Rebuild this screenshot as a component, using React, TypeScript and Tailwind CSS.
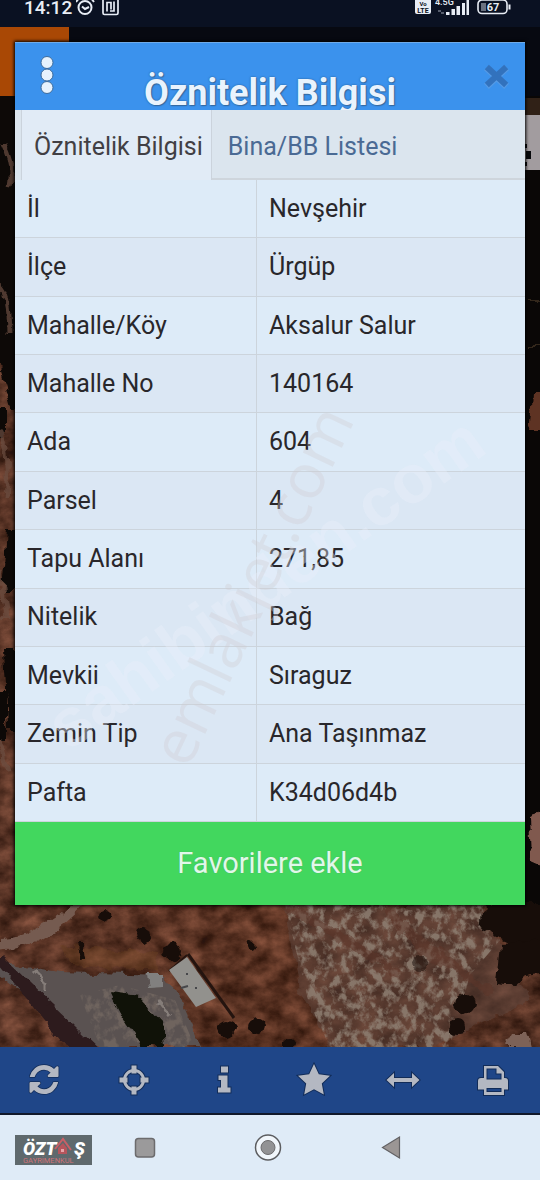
import React, { useState } from "react";

const rows: [string, string][] = [
  ["İl", "Nevşehir"],
  ["İlçe", "Ürgüp"],
  ["Mahalle/Köy", "Aksalur Salur"],
  ["Mahalle No", "140164"],
  ["Ada", "604"],
  ["Parsel", "4"],
  ["Tapu Alanı", "271,85"],
  ["Nitelik", "Bağ"],
  ["Mevkii", "Sıraguz"],
  ["Zemin Tip", "Ana Taşınmaz"],
  ["Pafta", "K34d06d4b"],
];

function StatusBar() {
  return (
    <header className="flex h-[27px] items-start justify-between overflow-hidden bg-[#0a1122] pl-6 pr-7 text-[#e8edf5]">
      <div className="flex items-start">
        <span className="text-[19px] leading-4 font-medium">14:12</span>
        <svg width="50" height="18" viewBox="0 0 50 18" className="ml-1" fill="none" stroke="#e8edf5" strokeWidth="2">
          <circle cx="9" cy="7.500" r="6.500" />
          <path d="M6 6.500l3 2.500 4-2M2-.5L0 2M16-.5L18 2" />
          <rect x="27" y="-2" width="15" height="16.500" rx="1.500" strokeWidth="1.700" />
          <path d="M31 11.500V2.500h4v7M34 11h4V1.500" strokeWidth="1.700" />
        </svg>
      </div>
      <svg width="98" height="18" viewBox="0 0 98 18" className="-mr-px" fill="#e8edf5" fontFamily="Roboto, sans-serif" fontWeight="700">
        <rect x="0" y="-3" width="16" height="17" rx="2" />
        <text x="8" y="6" fontSize="6" textAnchor="middle" fill="#0a1122">Vo</text>
        <text x="8" y="12.500" fontSize="7" textAnchor="middle" fill="#0a1122">LTE</text>
        <text x="20" y="5" fontSize="9" fontWeight="500">4.5G</text>
        <path d="M23 11h3M26 13h3" stroke="#a0a8b5" strokeWidth="1" />
        <path d="M31 12h3.500v3H31zM36.500 9H40v6h-3.500zM41.500 6H45v9h-3.500zM47 3h3v12h-3zM51.500 0H54v15h-2.500z" />
        <rect x="63" y="0" width="29" height="13.500" rx="4" fill="none" stroke="#e8edf5" strokeWidth="1.600" />
        <path d="M93.500 4.500h2v5h-2z" />
        <path d="M66 3h5v8h-5z" fill="#6b7280" />
        <text x="78" y="11" fontSize="11" textAnchor="middle">67</text>
      </svg>
    </header>
  );
}

function Satellite() {
  return (
    <svg className="absolute inset-0 h-full w-full" viewBox="0 27 540 1020" preserveAspectRatio="none" aria-hidden="true">
      <defs>
        <filter id="soil" x="0" y="0" width="100%" height="100%" colorInterpolationFilters="sRGB">
          <feTurbulence type="fractalNoise" baseFrequency="0.045 0.060" numOctaves="5" seed="8" />
          <feColorMatrix values="0.800 0 0 0 -0.050  0.550 0 0 0 -0.080  0.450 0 0 0 -0.090  0 0 0 0 1" />
        </filter>
        <filter id="rock" x="0" y="0" width="100%" height="100%" colorInterpolationFilters="sRGB">
          <feTurbulence type="fractalNoise" baseFrequency="0.120 0.100" numOctaves="4" seed="21" />
          <feColorMatrix values="0 0 0 0 0.560  0 0 0 0 0.500  0 0 0 0 0.450  4 1.500 0 0 -2.500" result="n" />
          <feComposite in="n" in2="SourceAlpha" operator="in" />
        </filter>
        <filter id="rough" x="-20%" y="-20%" width="140%" height="140%" colorInterpolationFilters="sRGB">
          <feTurbulence type="fractalNoise" baseFrequency="0.070" numOctaves="3" seed="3" result="t" />
          <feDisplacementMap in="SourceGraphic" in2="t" xChannelSelector="R" yChannelSelector="G" scale="12" />
          <feGaussianBlur stdDeviation="0.700" />
        </filter>
        <linearGradient id="ground" x1="0" x2="1">
          <stop offset="0" stopColor="#57362a" />
          <stop offset="0.500" stopColor="#5c3423" />
          <stop offset="1" stopColor="#452a20" />
        </linearGradient>
      </defs>
      <rect y="27" width="540" height="1020" fill="url(#ground)" />
      <rect y="27" width="540" height="1020" filter="url(#soil)" opacity="0.600" />
      <g filter="url(#rough)">
        <path d="M-10 90H28V410H12L-10 330ZM-8 410H5V440H-8ZM8 530H24V590H3ZM4 650H24V730H8ZM-4 690H6V740H-4Z" fill="#0d0907" />
        <path d="M4 145q10 20 6 40M-2 285q12 8 12 50M0 430q10 22 6 70M0 570l6 50M0 740l8 30" stroke="#6c4f42" strokeWidth="5" fill="none" opacity="0.700" />
      </g>
      <rect x="524" y="27" width="16" height="900" fill="#0a0706" />
      <g filter="url(#rough)">
        <path d="M533 395l10 0v36h-14z" fill="#5e3323" />
        <path d="M530 816l20-6v58l-18-8z" fill="#80594e" />
        <path d="M528 300h10M530 345h8" stroke="#33271b" strokeWidth="2" />
      </g>
      <g filter="url(#rough)">
        <path d="M0 938Q40 934 70 905L85 905Q50 945 0 952Z" fill="#755b50" />
        <path d="M0 962L60 972 165 975 185 1010 200 1047 95 1047 0 975Z" fill="#5a5251" />
        <path d="M60 945l95 8 5 18-90-6z" fill="#704522" opacity="0.350" />
      </g>
      <path d="M80 995L120 985 175 1000 195 1047H100Z" filter="url(#rock)" opacity="0.400" />
      <path d="M285 905L480 905 530 1000 430 1047 330 1047 300 990Z" fill="#5f473f" opacity="0.500" filter="url(#rough)" />
      <path d="M285 905L485 905 500 940 470 975 450 1047 330 1047 308 1000Z" filter="url(#rock)" opacity="0.850" />
      <g filter="url(#rough)">
        <path d="M285 905Q350 940 400 975M385 905Q410 945 445 965M400 925L490 992" stroke="#5c3327" strokeWidth="8" opacity="0.500" fill="none" />
        <path d="M505 1047l8-14h14l4 14z" fill="#7d6257" />
        <path d="M-6 958L4 958 102 1052H70Z" fill="#2d1b1d" />
      </g>
      <path d="M188 954L234 1018" stroke="#24140f" strokeWidth="3" />
      <path d="M169 971L187 955" stroke="#24140f" strokeWidth="2" />
      <path d="M169 970L187 957 216 998 196 1007Z" fill="#92918d" />
      <g filter="url(#rough)">
        <path d="M146 974h18v13l-16 1z" fill="#81807f" />
        <path d="M158 1001l13 16M32 970l14 14v8" stroke="#857d79" strokeWidth="3" fill="none" />
      </g>
      <path d="M186 974h2M195 988h2M181 988l7-2" stroke="#46474a" strokeWidth="2" />
      <g filter="url(#rough)" fill="#170d09">
        <path d="M110 994L140 998 162 1022 164 1047H142L124 1020Z" fill="#101208" />
        <circle cx="143" cy="935" r="8" />
        <circle cx="172" cy="951" r="9" />
        <path d="M78 944l5 0 2 15-5 1z" />
        <circle cx="225" cy="1029" r="9" />
        <circle cx="258" cy="1026" r="8" />
        <circle cx="251" cy="947" r="4" />
        <circle cx="104" cy="916" r="5" />
        <circle cx="288" cy="1044" r="5" />
        <circle cx="465" cy="1004" r="10" />
        <circle cx="457" cy="1026" r="7" />
        <circle cx="420" cy="964" r="8" opacity="0.500" />
        <path d="M485 903H545V945H515L482 930Z" />
        <path d="M500 943L545 940V974L525 977 515 986 496 984Z" />
      </g>
      <path d="M0 27H540V96H0Z" fill="#070911" />
      <path d="M0 27H69V96H0Z" fill="#a94805" />
      <rect x="524" y="98" width="16" height="17" fill="#302117" />
      <rect x="524" y="115" width="16" height="55" fill="#a29c9f" />
      <path d="M526 151h5v8h-5zM525 144h2v4h-2zM525 162h2v4h-2z" fill="#08090b" />
    </svg>
  );
}

function Watermarks() {
  return (
    <svg className="pointer-events-none absolute inset-0 h-full w-full" viewBox="15 42 510 863" aria-hidden="true">
      <text transform="translate(68 752) rotate(-35.500)" fontFamily="Liberation Sans, sans-serif" fontWeight="700" fontSize="68" fill="#eaf0f9" fillOpacity="0.380">
        sahibinden.com
      </text>
      <text transform="translate(188 770) rotate(-64.500)" fontFamily="Open Sans, sans-serif" fontWeight="400" fontSize="62" fill="#d0ccd2" fillOpacity="0.360">
        emlakjet.com
      </text>
    </svg>
  );
}

function InfoPanel() {
  const [tab, setTab] = useState(0);
  return (
    <section className="relative bg-[#ddeaf7] shadow-[0_0_3px_1px_#000000]" aria-label="Öznitelik Bilgisi">
      <div className="relative flex h-[68px] items-end justify-center overflow-hidden border-t border-[#6fabe8] bg-[#3b92ed]">
        <button aria-label="Menü" className="absolute left-5 top-3">
          <svg width="24" height="42" viewBox="0 0 24 42" fill="#e6f2fd" stroke="#3c6b9c" strokeWidth="1">
            <circle cx="12" cy="7.500" r="6" />
            <circle cx="12" cy="20" r="6" />
            <circle cx="12" cy="32.500" r="6" />
          </svg>
        </button>
        <h1 className="text-[36px] leading-[34px] font-bold text-[#e9f3fd] [text-shadow:0_0_2px_#24578c,1px_1px_1px_#3a6ea6]">Öznitelik Bilgisi</h1>
        <button aria-label="Kapat" className="absolute right-3 top-5">
          <svg width="32" height="28" viewBox="0 0 32 28" strokeLinecap="square">
            <path d="M8 7L23 21M23 7L8 21" stroke="#559ae5" strokeWidth="7" />
            <path d="M8 6L23 20M23 6L8 20" stroke="#3272bd" strokeWidth="6" />
          </svg>
        </button>
      </div>
      <div role="tablist" className="flex h-[70px] bg-[#dbe5ee] pl-[6px] text-[25px]">
        <button role="tab" aria-selected={tab === 0} onClick={() => setTab(0)} className="border-x border-[#cbd3dc] bg-[#e1ebf6] pt-1 pr-2 pl-3 text-[#413f44]">
          Öznitelik Bilgisi
        </button>
        <button role="tab" aria-selected={tab === 1} onClick={() => setTab(1)} className="grow border-b-2 border-[#ced5dc] px-4 pt-[6px] text-left text-[#4a6a94]">
          Bina/BB Listesi
        </button>
      </div>
      <table className="h-[642px] w-full table-fixed border-separate border-spacing-0 text-[25px] text-[#29272b]">
        <colgroup>
          <col className="w-[242px]" />
          <col />
        </colgroup>
        <tbody>
          {rows.map(([name, value]) => (
            <tr key={name} className="odd:bg-[#ddebf8] even:bg-[#dbe7f4]">
              <th scope="row" className="border-r border-b border-[#ccd4dc] pl-3 text-left font-normal">{name}</th>
              <td className="border-b border-[#ccd4dc] pl-3">{value}</td>
            </tr>
          ))}
        </tbody>
      </table>
      <button className="block h-[83px] w-full bg-[#42d75e] text-[29px] text-[#e1f8e9] [text-shadow:0_0_1px_#4b9e60]">Favorilere ekle</button>
      <Watermarks />
    </section>
  );
}

const tools: { label: string; icon: React.ReactNode }[] = [
  {
    label: "Yenile",
    icon: (
      <path
        transform="translate(3.500 4) scale(0.0189)"
        strokeWidth="80"
        d="M1511 928q0 5-1 7-64 268-268 434.500t-478 166.500q-146 0-282.500-55t-243.500-157l-129 129q-19 19-45 19t-45-19-19-45v-448q0-26 19-45t45-19h448q26 0 45 19t19 45-19 45l-137 137q71 66 161 102t187 36q134 0 250-65t186-179q11-17 53-117 8-23 30-23h192q13 0 22.500 9.500t9.500 22.500zm25-800v448q0 26-19 45t-45 19h-448q-26 0-45-19t-19-45 19-45l138-138q-148-137-349-137-134 0-250 65t-186 179q-11 17-53 117-8 23-30 23h-199q-13 0-22.500-9.500t-9.500-22.500v-7q65-268 270-434.500t480-166.500q146 0 284 55.500t245 156.500l130-129q19-19 45-19t45 19 19 45z"
      />
    ),
  },
  {
    label: "Konum",
    icon: (
      <>
        <circle cx="19" cy="19" r="9.500" fill="none" stroke="#122c58" strokeWidth="5" />
        <path d="M16.500 4.500h5v8h-5zM16.500 25.500h5v8h-5zM4.500 16.500h8v5h-8zM25.500 16.500h8v5h-8z" />
        <circle cx="19" cy="19" r="9.500" fill="none" stroke="#b4b8c2" strokeWidth="3" />
      </>
    ),
  },
  {
    label: "Bilgi",
    icon: <path d="M16 5.500h7v6h-7zM13.500 14.500h9v12h3v5h-12.500v-5h3v-7.500h-2.500z" />,
  },
  {
    label: "Favoriler",
    icon: <path d="M19 3l4.800 10.300L35 14.700l-8.200 7.700 2 11L19 28.200l-9.800 5.200 2-11L3 14.700l11.200-1.400z" />,
  },
  {
    label: "Ölçüm",
    icon: <path d="M2.500 19l7.500-7v5h18V12l7.500 7-7.500 7v-5H10V26z" />,
  },
  {
    label: "Yazdır",
    icon: (
      <path
        fillRule="evenodd"
        d="M10 5h14l6 6V17h1q3 0 3 3v8.500h-4v5.500h-20v-5.500H4V20q0-3 3-3h3zM12.500 7.500v11h15v-6h-5v-5zM12.500 27v4h15v-4z"
      />
    ),
  },
];

function Toolbar() {
  return (
    <nav aria-label="Harita araçları" className="grid h-[68px] grid-cols-6 border-b-2 border-[#11182a] bg-[#1f4688] pr-[2px]">
      {tools.map((t) => (
        <button key={t.label} aria-label={t.label} className="flex items-center justify-center">
          <svg width="38" height="38" viewBox="0 0 38 38" fill="#b4b8c2" stroke="#122c58" strokeWidth="2" paintOrder="stroke">
            {t.icon}
          </svg>
        </button>
      ))}
    </nav>
  );
}

function Logo() {
  return (
    <svg className="absolute left-[15px] top-5" width="77" height="30" viewBox="0 0 77 30" fontFamily="Roboto, sans-serif">
      <rect width="77" height="30" fill="#5f696d" />
      <g fill="#ffffff" fontWeight="900" fontStyle="italic" fontSize="18">
        <text x="8" y="20">ÖZT</text>
        <text x="59" y="20">Ş</text>
      </g>
      <path d="M40 14L48 4l8 11" fill="none" stroke="#c95f66" strokeWidth="2" />
      <path d="M43 13l5-5 4 5v6h-9z" fill="#b5555c" />
      <path d="M46 14h3v3h-3z" fill="#e6a3a7" />
      <text x="8" y="28" fontSize="7.500" fill="#cf7379">GAYRİMENKUL</text>
    </svg>
  );
}

function SystemNav() {
  return (
    <footer className="relative flex h-[65px] justify-center bg-[#dfebf7] pr-1">
      <button aria-label="Son uygulamalar" className="flex w-[123px] items-center justify-center">
        <svg width="30" height="30" viewBox="0 0 30 30">
          <rect x="5.500" y="5.500" width="19" height="18.500" rx="3" fill="#9b9a9b" stroke="#6c6b6d" strokeWidth="1.500" />
        </svg>
      </button>
      <button aria-label="Ana ekran" className="flex w-[123px] items-center justify-center">
        <svg width="30" height="30" viewBox="0 0 30 30">
          <circle cx="15" cy="14.500" r="12.500" fill="#f1f6fb" stroke="#5c5d60" strokeWidth="1.500" />
          <circle cx="15" cy="14.500" r="7" fill="#929294" stroke="#6c6b6d" />
        </svg>
      </button>
      <button aria-label="Geri" className="flex w-[123px] items-center justify-center">
        <svg width="30" height="30" viewBox="0 0 30 30">
          <path d="M6.500 14.500L23.500 4v21z" fill="#9b9695" stroke="#626164" strokeWidth="1.200" />
        </svg>
      </button>
      <Logo />
    </footer>
  );
}

export default function App() {
  return (
    <div className="flex min-h-screen flex-col bg-[#dfebf7] font-['Roboto',sans-serif]">
      <StatusBar />
      <main className="relative grow overflow-hidden px-[15px] pt-[15px] pb-[142px]">
        <Satellite />
        <InfoPanel />
      </main>
      <Toolbar />
      <SystemNav />
    </div>
  );
}
